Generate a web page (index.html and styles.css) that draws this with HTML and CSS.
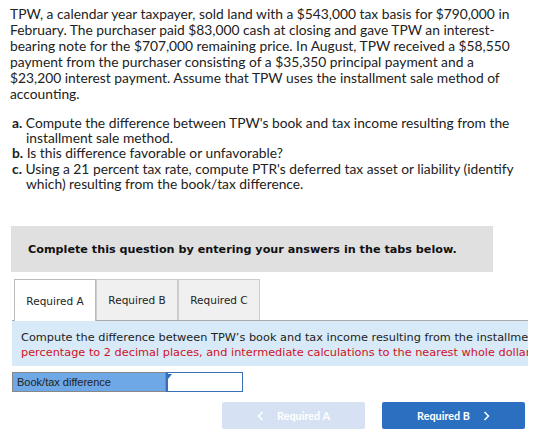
FILE: index.html
```html
<!DOCTYPE html>
<html lang="en">
  <head>
    <meta charset="UTF-8" />
    <meta name="viewport" content="width=device-width, initial-scale=1.0" />
    <title>Installment Sale Problem</title>
    <link rel="stylesheet" href="styles.css">
  </head>
  <body>
    <div class="question">
      <p class="stem">
        TPW, a calendar year taxpayer, sold land with a $543,000 tax basis for $790,000 in
        February. The purchaser paid $83,000 cash at closing and gave TPW an interest-bearing
        note for the $707,000 remaining price. In August, TPW received a $58,550 payment
        from the purchaser consisting of a $35,350 principal payment and a $23,200 interest
        payment. Assume that TPW uses the installment sale method of accounting.
      </p>

      <ol class="parts">
        <li><b>a.</b> Compute the difference between TPW's book and tax income resulting from the installment sale method.</li>
        <li><b>b.</b> Is this difference favorable or unfavorable?</li>
        <li><b>c.</b> Using a 21 percent tax rate, compute PTR's deferred tax asset or liability (identify which) resulting from the book/tax difference.</li>
      </ol>
    </div>

    <div class="notice">Complete this question by entering your answers in the tabs below.</div>

    <div class="tabs">
      <button class="tab active">Required A</button>
      <button class="tab">Required B</button>
      <button class="tab">Required C</button>
    </div>

    <div class="tab-panel">
      <div class="instructions">
        <p>Compute the difference between TPW’s book and tax income resulting from the installment sale method. <span class="warn">(Round your</span></p>
        <p class="warn">percentage to 2 decimal places, and intermediate calculations to the nearest whole dollar amount.)</p>
      </div>

      <div class="answer-row">
        <label class="answer-label" for="book-tax">Book/tax difference</label>
        <div class="answer-cell">
          <input class="answer-input" id="book-tax" type="text" />
        </div>
      </div>

      <div class="nav">
        <button class="nav-btn disabled">
          <svg class="chev" width="7" height="10" viewBox="0 0 7 10"><path d="M5.5 1 L1.5 5 L5.5 9" /></svg>
          Required A
        </button>
        <button class="nav-btn primary">
          Required B
          <svg class="chev" width="7" height="10" viewBox="0 0 7 10"><path d="M1.5 1 L5.5 5 L1.5 9" /></svg>
        </button>
      </div>
    </div>
  </body>
</html>
```

FILE: styles.css
```css
body {
  margin: 0;
  padding: 0 10px;
  background: #fff;
  color: #222;
}

.question {
  font-family: "Lato", "Noto Sans", sans-serif;
  font-size: 13.8px;
  width: 510px;
}

.stem {
  margin: 6px 0 0 0;
  line-height: 16px;
}

.parts {
  list-style: none;
  margin: 13px 0 0 2px;
  padding: 0;
  line-height: 15.2px;
}

.parts li {
  padding-left: 14px;
  text-indent: -14px;
}

.notice {
  margin: 35px 57px 0 1px;
  height: 46px;
  padding-left: 17px;
  display: flex;
  align-items: center;
  background: #e0e0e0;
  font-family: "DejaVu Sans", Verdana, sans-serif;
  font-weight: bold;
  font-size: 11.2px;
  color: #111;
}

.tabs {
  display: flex;
  margin: 7px 0 0 4px;
  height: 41px;
}

.tab {
  width: 82px;
  border: 1px solid #ccc;
  border-bottom: none;
  background: #f0f0f0;
  font-family: "DejaVu Sans", Verdana, sans-serif;
  font-size: 10.5px;
  color: #222;
  padding: 0;
}

.tab.active {
  position: relative;
  height: 42px;
  background: #fff;
  border-color: #bbb;
}

.tab-panel {
  margin: 0 22px 0 2px;
  border-top: 1px solid #aaa;
}

.instructions {
  background: #d8eaf8;
  padding: 9px 0 6px 9px;
  font-family: "DejaVu Sans", Verdana, sans-serif;
  font-size: 11.3px;
  line-height: 15px;
  white-space: nowrap;
  overflow: hidden;
}

.instructions p {
  margin: 0;
}

.warn {
  color: #d0101e;
}

.answer-row {
  display: flex;
  margin-top: 6px;
  height: 20px;
}

.answer-label {
  width: 148px;
  padding-left: 4px;
  display: flex;
  align-items: center;
  background: #6ea8e6;
  border: 1px solid #888;
  font-family: "Liberation Sans", Arial, sans-serif;
  font-size: 11px;
  color: #222;
}

.answer-cell {
  position: relative;
  width: 77px;
}

/* small marker in the corner of an unanswered cell */
.answer-cell::before {
  content: "";
  position: absolute;
  top: 2px;
  left: 2px;
  border-top: 5px solid #2b6fc1;
  border-right: 4px solid transparent;
}

.answer-input {
  width: 100%;
  height: 100%;
  box-sizing: border-box;
  border: 1px solid #3a6fb3;
  border-left: 2px solid #3a6fb3;
  margin: 0;
  padding: 0;
}

.nav {
  display: flex;
  gap: 17px;
  margin: 10px 0 0 210px;
}

.nav-btn {
  width: 143px;
  height: 27px;
  border: none;
  border-radius: 2px;
  color: #fff;
  font-family: "Lato", sans-serif;
  font-weight: bold;
  font-size: 10.8px;
  display: flex;
  align-items: center;
  justify-content: center;
  gap: 13px;
}

.nav-btn.disabled {
  background: #d6e2f3;
}

.nav-btn.primary {
  background: #2b6fc1;
}

.chev path {
  fill: none;
  stroke: #fff;
  stroke-width: 1.5;
}
```
